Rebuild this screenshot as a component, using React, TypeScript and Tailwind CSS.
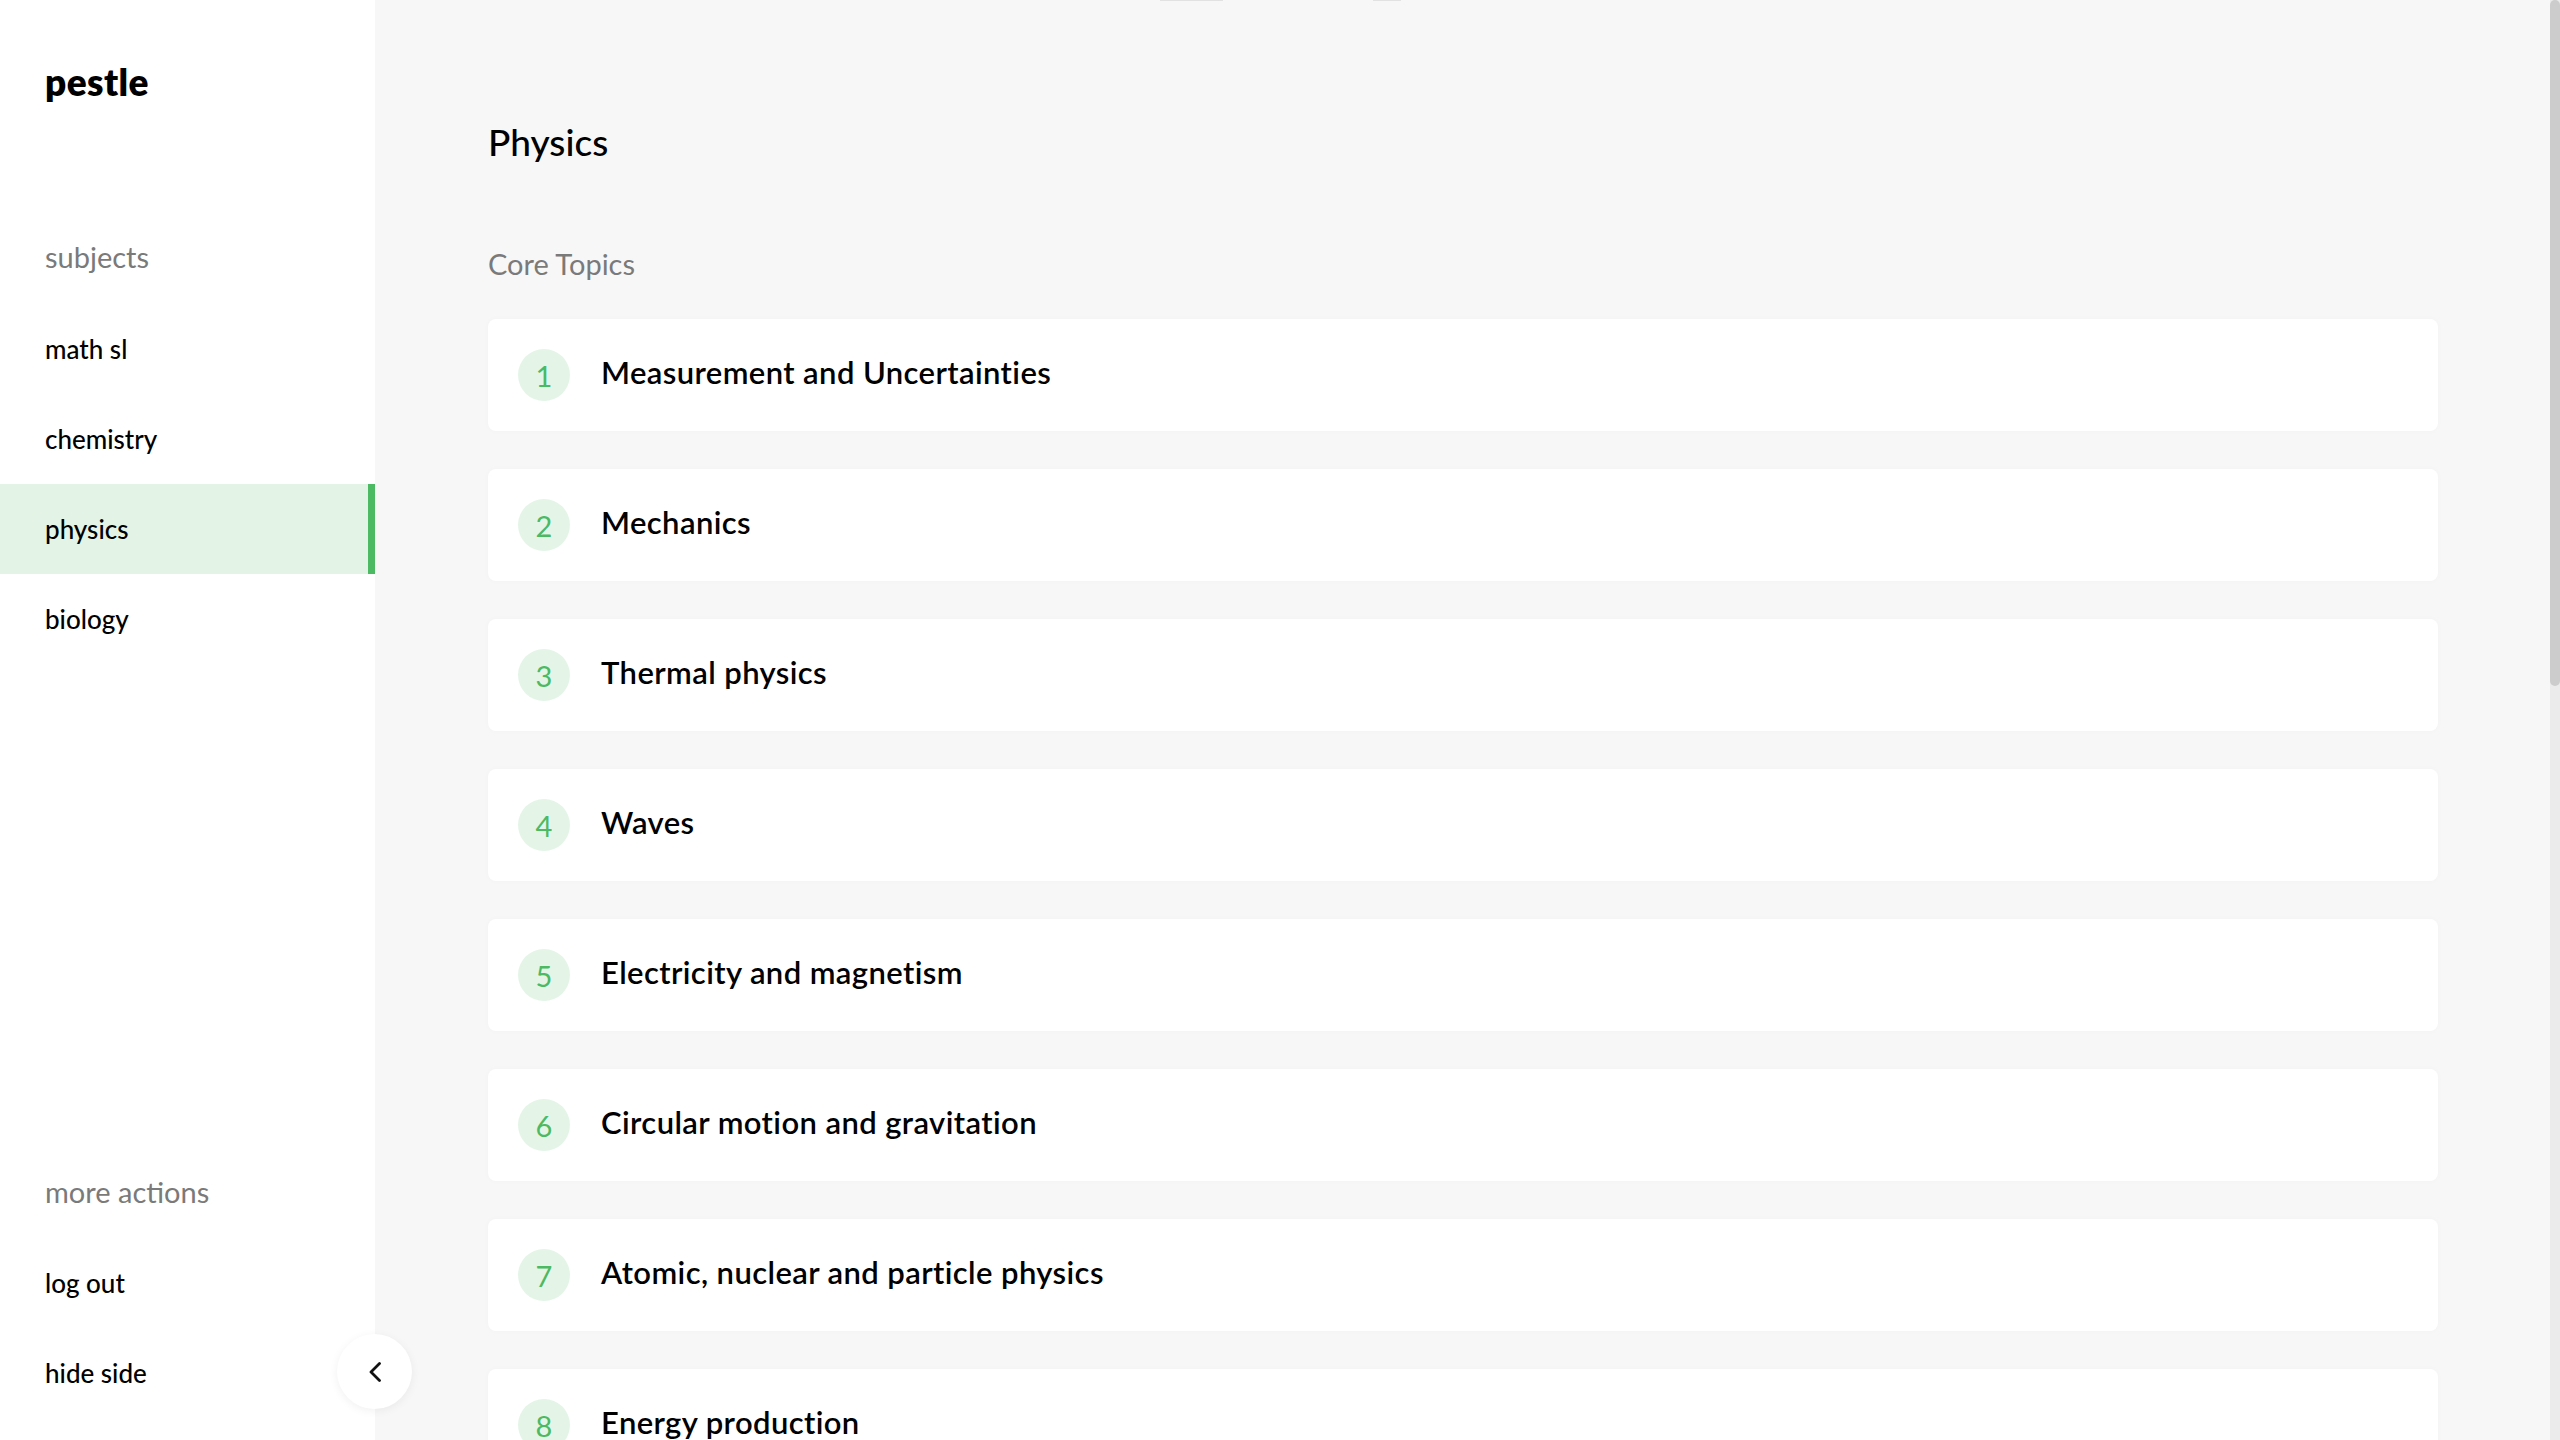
import React from "react";

const subjects = ["math sl", "chemistry", "physics", "biology"];
const topics = [
  "Measurement and Uncertainties",
  "Mechanics",
  "Thermal physics",
  "Waves",
  "Electricity and magnetism",
  "Circular motion and gravitation",
  "Atomic, nuclear and particle physics",
  "Energy production",
];

export default function App() {
  return (
    <div className="flex h-screen w-full overflow-hidden bg-[#f7f7f7] font-['Lato','Liberation_Sans',sans-serif] text-[#111]">
      <aside className="relative flex h-full w-[375px] shrink-0 flex-col bg-white">
        <div className="h-[103px] pl-[45px] pt-[62px] text-[37px] font-extrabold leading-[40px] tracking-[0.4px] text-black">
          pestle
        </div>
        <div className="mt-[134px] h-[40px] pl-[45px] text-[29px] leading-[40px] text-[#7a7a7a]">
          subjects
        </div>
        <nav className="mt-[27px] flex flex-col">
          {subjects.map((s) => (
            <div
              key={s}
              className={
                s === "physics"
                  ? "flex h-[90px] items-center border-r-[7px] border-[#4cb963] bg-[#e3f4e6] pl-[45px] text-[26px] font-medium text-black"
                  : "flex h-[90px] items-center pl-[45px] text-[26px] font-medium text-black"
              }
            >
              {s}
            </div>
          ))}
        </nav>
        <div className="mt-auto flex flex-col pb-[22px]">
          <div className="h-[40px] pl-[45px] text-[29px] leading-[40px] text-[#7a7a7a]">more actions</div>
          <div className="mt-[26px] flex h-[90px] items-center pl-[45px] text-[26px] font-medium text-black">log out</div>
          <div className="flex h-[90px] items-center pl-[45px] text-[26px] font-medium text-black">hide side</div>
        </div>
        <button className="absolute bottom-[31px] right-[-37px] z-10 flex h-[75px] w-[75px] items-center justify-center rounded-full bg-white shadow-[0_2px_10px_rgba(0,0,0,0.06)]">
          <svg width="14" height="20" viewBox="0 0 14 20" fill="none">
            <path d="M11.5 1.5L3 10l8.5 8.5" stroke="#111" strokeWidth="2.8" strokeLinecap="round" strokeLinejoin="round" />
          </svg>
        </button>
      </aside>

      <main className="h-full flex-1 overflow-hidden pl-[113px] pr-[112px]">
        <div className="flex h-px">
          <div className="ml-[672px] w-[63px] bg-[#e2e2e2]" />
          <div className="ml-[150px] w-[28px] bg-[#e2e2e2]" />
        </div>
        <h1 className="mt-[119px] text-[37px] font-medium leading-[44px] text-black">Physics</h1>
        <div className="mt-[80px] text-[29px] leading-[40px] text-[#7a7a7a]">Core Topics</div>
        <div className="mt-[35px] flex flex-col gap-[38px]">
          {topics.map((t, i) => (
            <div
              key={t}
              className="flex h-[112px] shrink-0 items-center rounded-[8px] bg-white pl-[30px] shadow-[0_0_6px_rgba(0,0,0,0.025)]"
            >
              <div className="flex h-[52px] w-[52px] shrink-0 items-center justify-center rounded-full bg-[#e4f5e8] pt-[2px] text-[29px] text-[#4cb963]">
                {i + 1}
              </div>
              <div className="ml-[31px] pb-[6px] text-[31px] font-semibold tracking-[0.4px] text-black">{t}</div>
            </div>
          ))}
        </div>
      </main>

      <div className="h-full w-[10px] shrink-0 bg-[#ebebeb]">
        <div className="h-[686px] w-full rounded-full bg-[#cccccc]" />
      </div>
    </div>
  );
}
